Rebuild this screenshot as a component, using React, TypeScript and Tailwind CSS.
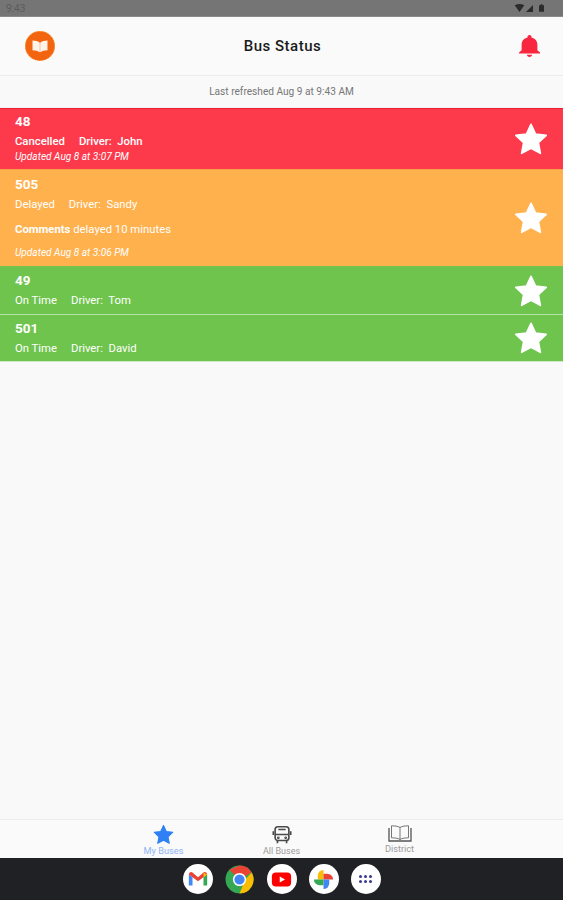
const STAR = "M12 1.6l3.2 6.9 7.5.9-5.5 5.2 1.4 7.5L12 18.5l-6.6 3.6 1.4-7.5L1.3 9.4l7.5-.9z";

const Star = ({ className }: { className: string }) => (
    <svg viewBox="0 0 24 24" className={className} fill="currentColor" stroke="currentColor" strokeWidth="1.2" strokeLinejoin="round">
        <path d={STAR} />
    </svg>
);

interface BusProps {
    num: string,
    status: string,
    driver: string,
    color: string,
    updated?: string,
    comment?: string,
    boldStatus?: boolean,
    height: string,
    top: string
}

const BusRow = ({ num, status, driver, color, updated, comment, boldStatus, height, top }: BusProps) => (
    <div className={`flex items-center justify-between pl-[15px] pr-[15px] text-white ${color} ${height}`}>
        <div className={`flex flex-col self-start ${top}`}>
            <div className="text-[13.5px] leading-[16px] font-bold">{num}</div>
            <div className={`flex mt-[6px] text-[11.3px] leading-[14px] gap-[14px] ${boldStatus ? 'font-medium' : ''}`}>
                <span>{status}</span>
                <span>Driver:&nbsp; {driver}</span>
            </div>
            {comment && (
                <div className="mt-[11px] text-[11.3px] leading-[14px]">
                    <span className="font-bold">Comments</span> {comment}
                </div>
            )}
            {updated && (
                <div className={`${comment ? 'mt-[9px]' : 'mt-[1px]'} text-[10.1px] leading-[14px] italic`}>{updated}</div>
            )}
        </div>
        <Star className="w-[34px] h-[34px] text-white" />
    </div>
);

const GmailIcon = () => (
    <svg viewBox="0 0 24 24" className="w-[22px] h-[22px]" fill="none">
        <path d="M2 7v12h4V10z" fill="#4285f4" />
        <path d="M22 7v12h-4V10z" fill="#34a853" />
        <path d="M2 7c0-2.500 2.500-3.500 4-2.200L12 10l6-5.200c1.500-1.300 4-.3 4 2.200l-4 3-6 4.500-6-4.500z" fill="#ea4335" />
        <path d="M18 4.800 22 7l-4 3z" fill="#fbbc04" />
    </svg>
);

const ChromeIcon = () => (
    <svg viewBox="0 0 30 30" className="w-[29px] h-[29px]">
        <circle cx="15" cy="15" r="14.500" fill="#34a853" />
        <path d="M15 .5A14.500 14.500 0 0 1 27.560 7.750L15 15 4.500 5z" fill="#ea4335" />
        <path d="M27.560 7.750A14.500 14.500 0 0 1 15 29.500L21 15z" fill="#fbbc04" />
        <circle cx="15" cy="15" r="6.800" fill="white" />
        <circle cx="15" cy="15" r="5.300" fill="#4285f4" />
    </svg>
);

const YoutubeIcon = () => (
    <svg viewBox="0 0 24 24" className="w-[21px] h-[21px]">
        <rect x="1" y="4" width="22" height="16" rx="4.500" fill="#f00" />
        <path d="M10 8.500v7l6-3.500z" fill="white" />
    </svg>
);

const PhotosIcon = () => (
    <svg viewBox="0 0 24 24" className="w-[23px] h-[23px]">
        <path d="M12 12V2a6 6 0 0 0-6 6v4z" fill="#fbbc04" />
        <path d="M12 12h10a6 6 0 0 0-6-6h-4z" fill="#ea4335" />
        <path d="M12 12v10a6 6 0 0 0 6-6v-4z" fill="#4285f4" />
        <path d="M12 12H2a6 6 0 0 0 6 6h4z" fill="#34a853" />
    </svg>
);

const AppsIcon = () => (
    <div className="grid grid-cols-3 gap-x-[2px] gap-y-[2px]">
        {['a', 'b', 'c', 'd', 'e', 'f'].map((k) => (
            <div key={k} className="w-[3px] h-[3px] rounded-full bg-[#3c3c8c]" />
        ))}
    </div>
);

const DockItem = ({ children, bare }: { children: React.ReactNode, bare?: boolean }) => (
    <div className={`w-[30px] h-[30px] rounded-full flex items-center justify-center overflow-hidden ${bare ? '' : 'bg-white'}`}>
        {children}
    </div>
);

export default function App() {
    return (
        <div className="w-[563px] h-[900px] flex flex-col bg-[#f9f9f9] overflow-hidden" style={{ fontFamily: 'Roboto, sans-serif' }}>
            {/* status bar */}
            <div className="h-[17px] shrink-0 bg-[#757575] border-b border-[#8a8a8a] flex items-center justify-between pl-[6px] pr-[19px]">
                <span className="text-[10px] text-[#5c5c5c]">9:43</span>
                <div className="flex items-center gap-[1px]">
                    <svg viewBox="0 0 12 10" className="w-[11px] h-[8px]" fill="#2b2b2b"><path d="M0 1.500Q6-1.500 12 1.500L6 10z" /></svg>
                    <svg viewBox="0 0 10 10" className="w-[7px] h-[7px]" fill="#2b2b2b"><path d="M10 0v10H0z" /></svg>
                    <svg viewBox="0 0 8 12" className="w-[5px] h-[8px] ml-[5px]" fill="#2b2b2b"><path d="M2.500 0h3v1.500H8V12H0V1.500h2.500z" /></svg>
                </div>
            </div>

            {/* header */}
            <div className="h-[59px] shrink-0 flex items-center justify-between pl-[25px] pr-[23px] border-b border-[#ececec] bg-[#fafafa]">
                <div className="w-[30px] h-[30px] rounded-full bg-[#f2640f] border border-dotted border-[#f8a13c] flex items-center justify-center">
                    <svg viewBox="0 0 24 24" className="w-[20px] h-[20px]" fill="#fdf3ea">
                        <path d="M3 5.500c3.500 0 6.800.8 8.800 2.500V19.500C9.800 18 6.500 17 3 17z" />
                        <path d="M21 5.500c-3.500 0-6.800.8-8.800 2.500V19.500c2-1.500 5.300-2.500 8.800-2.500z" />
                    </svg>
                </div>
                <h1 className="text-[15px] font-medium tracking-[0.5px] text-[#1a1a1a] ml-[-9px]">Bus Status</h1>
                <svg viewBox="4 2.500 16 19.500" preserveAspectRatio="none" className="w-[21px] h-[22px] text-[#f9263f]" fill="currentColor">
                    <path d="M12 22c1.100 0 2-.9 2-2h-4c0 1.100.9 2 2 2zm6-6v-5c0-3.070-1.630-5.640-4.500-6.320V4c0-.83-.67-1.500-1.500-1.500s-1.500.67-1.500 1.500v.68C7.640 5.360 6 7.920 6 11v5l-2 2v1h16v-1l-2-2z" />
                </svg>
            </div>

            {/* refresh row */}
            <div className="h-[32px] shrink-0 flex items-center justify-center text-[10.15px] text-[#777777] border-b border-[#f2f2f2]">
                Last refreshed Aug 9 at 9:43 AM
            </div>

            {/* bus list */}
            <div className="flex flex-col shrink-0">
                <div className="h-[1px] bg-[#f01c30]" />
                <BusRow num="48" status="Cancelled" driver="John" color="bg-[#fc3a4c]" updated="Updated Aug 8 at 3:07 PM" boldStatus height="h-[60px]" top="pt-[4px]" />
                <div className="h-[1px] bg-[#f5a24b]" />
                <BusRow num="505" status="Delayed" driver="Sandy" color="bg-[#ffb14e]" comment="delayed 10 minutes" updated="Updated Aug 8 at 3:06 PM" height="h-[96px]" top="pt-[6px]" />
                <div className="h-[1px] bg-[#71c44f]" />
                <BusRow num="49" status="On Time" driver="Tom" color="bg-[#6fc44e]" height="h-[47px]" top="pt-[5px]" />
                <div className="h-[1px] bg-[#b7e2a5]" />
                <BusRow num="501" status="On Time" driver="David" color="bg-[#6fc44e]" height="h-[46px]" top="pt-[5px]" />
                <div className="h-[1px] bg-[#cfe9c3]" />
            </div>

            <div className="flex-1" />

            {/* tab bar */}
            <div className="h-[39px] shrink-0 flex justify-center gap-[78px] border-t border-[#ededed] bg-[#fafafa]">
                <div className="w-[40px] flex flex-col items-center pt-[4px]">
                    <Star className="w-[21px] h-[21px] text-[#2f80f5]" />
                    <span className="text-[9.2px] leading-[10px] mt-[1px] text-[#8fb4f5] whitespace-nowrap">My Buses</span>
                </div>
                <div className="w-[40px] flex flex-col items-center pt-[4px]">
                    <svg viewBox="0 0 24 24" className="w-[22px] h-[22px]" fill="none" stroke="#4a4a4a" strokeWidth="1.800">
                        <rect x="4.500" y="3" width="15" height="15" rx="3" />
                        <path d="M4.500 11.500h15M8 6h8M7 18v3M17 18v3M2.500 8v4M21.500 8v4" />
                        <circle cx="8" cy="15" r="0.600" />
                        <circle cx="16" cy="15" r="0.600" />
                    </svg>
                    <span className="text-[9px] leading-[10px] text-[#9a9a9a] whitespace-nowrap">All Buses</span>
                </div>
                <div className="w-[40px] flex flex-col items-center pt-[5px]">
                    <svg viewBox="0 0 24 17" className="w-[24px] h-[17px]" fill="none" stroke="#555555" strokeWidth="1.300">
                        <path d="M12 2.500C10 1.200 6.500 .8 3.500 .8v12c3 0 6.500.4 8.500 1.700 2-1.300 5.500-1.700 8.500-1.700V.8c-3 0-6.500.4-8.500 1.700zM12 2.500v12" strokeWidth="0.800" />
                        <path d="M1 3v13h22V3" />
                    </svg>
                    <span className="text-[9.2px] leading-[10px] mt-[2px] text-[#9a9a9a] whitespace-nowrap">District</span>
                </div>
            </div>

            {/* dock */}
            <div className="h-[42px] shrink-0 bg-[#202124] flex items-center justify-center gap-[12px]">
                <DockItem><GmailIcon /></DockItem>
                <DockItem bare><ChromeIcon /></DockItem>
                <DockItem><YoutubeIcon /></DockItem>
                <DockItem><PhotosIcon /></DockItem>
                <DockItem><AppsIcon /></DockItem>
            </div>
        </div>
    );
}
